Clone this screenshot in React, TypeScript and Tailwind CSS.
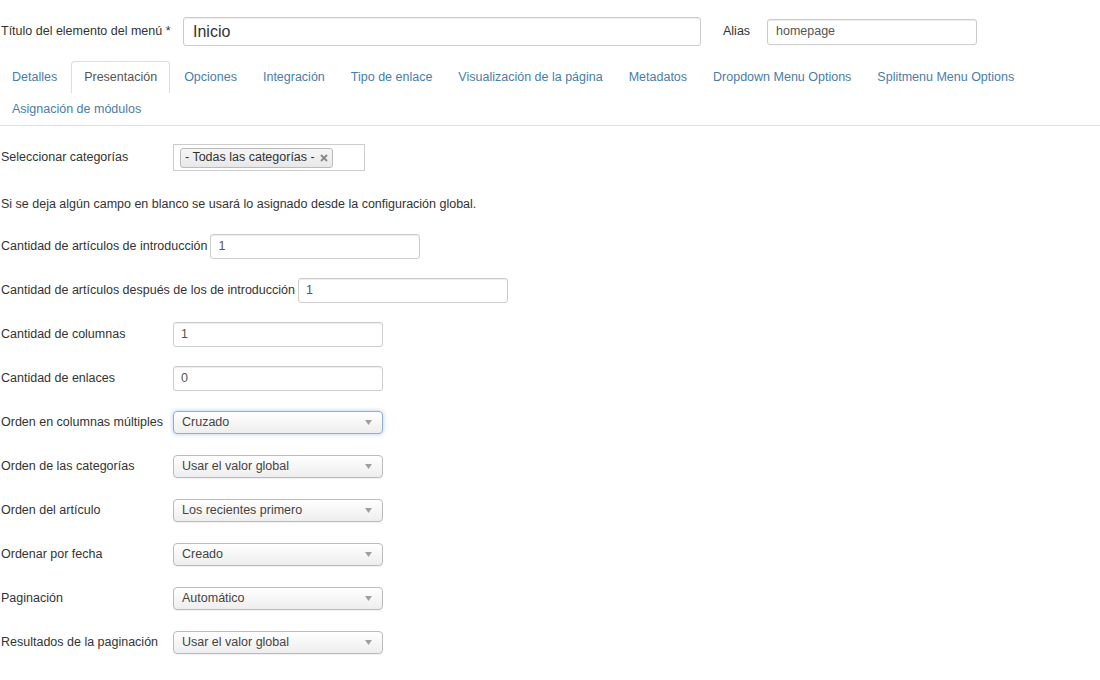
import React from 'react';

const tabs = [
  'Detalles',
  'Presentación',
  'Opciones',
  'Integración',
  'Tipo de enlace',
  'Visualización de la página',
  'Metadatos',
  'Dropdown Menu Options',
  'Splitmenu Menu Options',
  'Asignación de módulos',
];

type Field =
  | { label: string; kind: 'text'; value: string }
  | { label: string; kind: 'select'; value: string; focused?: boolean };

const fields: Field[] = [
  { label: 'Cantidad de artículos de introducción', kind: 'text', value: '1' },
  { label: 'Cantidad de artículos después de los de introducción', kind: 'text', value: '1' },
  { label: 'Cantidad de columnas', kind: 'text', value: '1' },
  { label: 'Cantidad de enlaces', kind: 'text', value: '0' },
  { label: 'Orden en columnas múltiples', kind: 'select', value: 'Cruzado', focused: true },
  { label: 'Orden de las categorías', kind: 'select', value: 'Usar el valor global' },
  { label: 'Orden del artículo', kind: 'select', value: 'Los recientes primero' },
  { label: 'Ordenar por fecha', kind: 'select', value: 'Creado' },
  { label: 'Paginación', kind: 'select', value: 'Automático' },
  { label: 'Resultados de la paginación', kind: 'select', value: 'Usar el valor global' },
];

function SelectBox({ value, focused }: { value: string; focused?: boolean }) {
  return (
    <div
      className={`flex h-[23px] w-[210px] items-center justify-between rounded-[4px] border bg-gradient-to-b from-white to-[#eeeeee] pl-[8px] pr-[10px] text-[#444] ${
        focused
          ? 'border-[#93acd0] shadow-[0_0_4px_rgba(82,130,200,0.45)]'
          : 'border-[#bbbbbb] shadow-[0_1px_1px_rgba(0,0,0,0.06)]'
      }`}
    >
      <span>{value}</span>
      <svg width="7" height="5" viewBox="0 0 7 5">
        <polygon points="0,0 7,0 3.5,5" fill="#a0a0a0" />
      </svg>
    </div>
  );
}

export default function App() {
  return (
    <div className="min-h-[680px] w-[1100px] bg-white font-['Liberation_Sans',Arial,sans-serif] text-[12.5px] text-[#333]">
      {/* Title + alias */}
      <div className="flex items-center pt-[17px]">
        <label className="w-[183px] pl-[1px]">Título del elemento del menú *</label>
        <div className="flex h-[29px] w-[518px] items-center rounded-[3px] border border-[#cccccc] pl-[9px] text-[16px] text-[#333] shadow-[inset_0_1px_1px_rgba(0,0,0,0.075)]">
          Inicio
        </div>
        <label className="ml-[22px] w-[44px]">Alias</label>
        <div className="flex h-[26px] w-[210px] items-center rounded-[3px] border border-[#cccccc] pl-[8px] text-[#555] shadow-[inset_0_1px_1px_rgba(0,0,0,0.075)]">
          homepage
        </div>
      </div>

      {/* Tabs */}
      <div className="mt-[15px] flex flex-wrap border-b border-[#dddddd]">
        {tabs.map((t) => (
          <div
            key={t}
            className={`mr-[2px] flex h-[32px] items-center px-[12px] ${
              t === 'Presentación'
                ? 'rounded-t-[4px] border border-b-0 border-[#dddddd] bg-white text-[#555]'
                : 'text-[#4a7cab]'
            }`}
          >
            {t}
          </div>
        ))}
      </div>

      {/* Categories */}
      <div className="mt-[18px] flex h-[27px] items-center">
        <label className="w-[173px] pl-[1px]">Seleccionar categorías</label>
        <div className="flex h-[27px] w-[192px] items-center border border-[#cccccc] pl-[6px]">
          <span className="flex h-[20px] items-center gap-[5px] rounded-[3px] border border-[#bbbbbb] bg-gradient-to-b from-[#f6f6f6] to-[#e8e8e8] px-[4px] text-[#333]">
            - Todas las categorías -
            <svg width="8" height="8" viewBox="0 0 8 8">
              <path d="M1 1 L7 7 M7 1 L1 7" stroke="#8a8a8a" strokeWidth="2" />
            </svg>
          </span>
        </div>
      </div>

      <p className="mt-[26px] pl-[1px] leading-[14px]">
        Si se deja algún campo en blanco se usará lo asignado desde la configuración global.
      </p>

      {/* Fields */}
      <div className="mt-[22px] flex flex-col gap-[18px]">
        {fields.map((f) => (
          <div key={f.label} className="flex h-[26px] items-center">
            <label className="min-w-[173px] pl-[1px] pr-[3px]">{f.label}</label>
            {f.kind === 'text' ? (
              <div className="flex h-[25px] w-[210px] items-center rounded-[3px] border border-[#cccccc] pl-[7px] text-[#555] shadow-[inset_0_1px_1px_rgba(0,0,0,0.075)]">
                {f.value}
              </div>
            ) : (
              <SelectBox value={f.value} focused={f.focused} />
            )}
          </div>
        ))}
      </div>
    </div>
  );
}
